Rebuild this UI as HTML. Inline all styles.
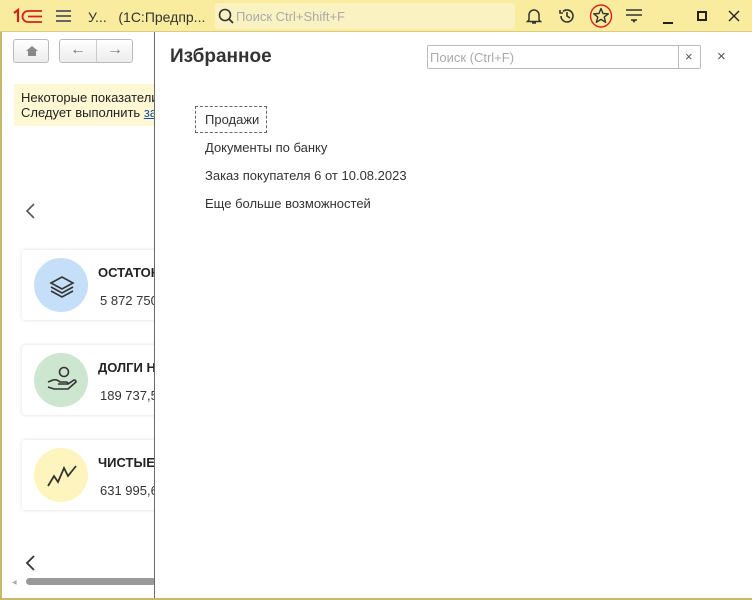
<!DOCTYPE html>
<html><head><meta charset="utf-8"><style>
*{margin:0;padding:0;box-sizing:border-box}
body{width:752px;height:600px;overflow:hidden;position:relative;background:#fff;font-family:"Liberation Sans",Arial,sans-serif;color:#333;font-size:13px}
.top{position:absolute;left:0;top:0;width:752px;height:32px;background:#f9ec9f;border-bottom:1px solid #d8cb83}
.lb{position:absolute;left:0;top:32px;width:2px;height:568px;background:#c8b86c}
.bb{position:absolute;left:0;top:598px;width:752px;height:2px;background:#c8b86c}
.btn{position:absolute;top:39px;height:24px;border:1px solid #bbb;border-radius:3px;background:linear-gradient(#fff,#ececec)}
.card{position:absolute;left:22px;width:140px;height:70px;background:#fff;box-shadow:0 0 4px rgba(0,0,0,.12);border-radius:3px}
.circ{position:absolute;left:12px;top:8px;width:54px;height:54px;border-radius:50%}
.ct{position:absolute;left:76px;top:15px;font-weight:bold;font-size:13px;color:#222}
.cv{position:absolute;left:78px;top:43px;font-size:13px;color:#333}
.panel{position:absolute;left:154px;top:32px;width:598px;height:566px;background:#fff;border-left:1.5px solid #6a6a6a}
.fav{position:absolute;left:50px;font-size:13px;color:#333}
</style></head><body>
<div class="top">
 <svg style="position:absolute;left:12px;top:8px" width="32" height="16" viewBox="0 0 32 16"><path d="M2 5 L6 2 V14" stroke="#d42020" stroke-width="2.2" fill="none"/><path d="M30 3 H16 A5.5 5.5 0 0 0 16 14 H30 M30 8.5 H16" stroke="#d42020" stroke-width="1.8" fill="none"/></svg>
 <div style="position:absolute;left:56px;top:10px;width:15px;height:2px;background:#666;box-shadow:0 5px 0 #666,0 10px 0 #666"></div>
 <div style="position:absolute;left:88px;top:9px;font-size:14px;color:#333">У...&nbsp;&nbsp; (1С:Предпр...</div>
 <div style="position:absolute;left:215px;top:3px;width:300px;height:26px;background:#fbf2c2;border-radius:3px"></div>
 <svg style="position:absolute;left:218px;top:8px" width="16" height="16"><circle cx="7" cy="7" r="5.5" stroke="#333" stroke-width="1.6" fill="none"/><path d="M11 11 L15 15" stroke="#333" stroke-width="1.8"/></svg>
 <div style="position:absolute;left:236px;top:9px;font-size:13px;color:#aaa">Поиск Ctrl+Shift+F</div>
 <svg style="position:absolute;left:525px;top:7px" width="18" height="18"><path d="M4 13 V8 A5 5 0 0 1 14 8 V13 L15.5 14.5 H2.5 Z M7 16 H11" stroke="#333" stroke-width="1.5" fill="none"/></svg>
 <svg style="position:absolute;left:558px;top:7px" width="18" height="18"><path d="M3 9 A6 6 0 1 0 5 4.5 M2 3 V6 H5 M9 5 V9 L12 11" stroke="#333" stroke-width="1.6" fill="none"/></svg>
 <svg style="position:absolute;left:588px;top:3px" width="26" height="26"><ellipse cx="13" cy="13" rx="10.5" ry="11" stroke="#e02020" stroke-width="1.4" fill="none"/><path d="M13 5.5 L15 10.5 L20.3 10.8 L16.2 14.1 L17.6 19.3 L13 16.4 L8.4 19.3 L9.8 14.1 L5.7 10.8 L11 10.5 Z" stroke="#333" stroke-width="1.4" fill="none" stroke-linejoin="round"/></svg>
 <svg style="position:absolute;left:625px;top:8px" width="18" height="16"><path d="M1 2 H17 M1 7 H17 M6 12 H12" stroke="#333" stroke-width="1.5"/><path d="M7 12 L9 15 L11 12Z" fill="#333"/></svg>
 <div style="position:absolute;left:663px;top:22px;width:10px;height:2px;background:#222"></div>
 <div style="position:absolute;left:697px;top:11px;width:10px;height:10px;border:2px solid #222"></div>
 <svg style="position:absolute;left:728px;top:10px" width="12" height="12"><path d="M1 1 L11 11 M11 1 L1 11" stroke="#222" stroke-width="1.4"/></svg>
</div>
<div class="lb"></div><div class="bb"></div>
<div class="btn" style="left:13px;width:36px"><svg style="position:absolute;left:11px;top:5px" width="14" height="12"><path d="M1 6 L7 1 L13 6 H11 V11 H3 V6Z" fill="#888"/></svg></div>
<div class="btn" style="left:59px;width:74px"><div style="position:absolute;left:36px;top:0;width:1px;height:22px;background:#ccc"></div><div style="position:absolute;left:10px;top:1px;font-size:16px;color:#777">&#8592;</div><div style="position:absolute;left:47px;top:1px;font-size:16px;color:#777">&#8594;</div></div>
<div style="position:absolute;left:14px;top:84px;width:145px;height:42px;background:#fdf7d3"></div>
<div style="position:absolute;left:21px;top:90px;font-size:13px;color:#222;line-height:15px;white-space:nowrap">Некоторые показатели<br>Следует выполнить <span style="color:#1a4fa0;text-decoration:underline">за</span></div>
<svg style="position:absolute;left:24px;top:203px" width="12" height="16"><path d="M10 1 L3 8 L10 15" stroke="#555" stroke-width="1.6" fill="none"/></svg>
<div class="card" style="top:250px"><div class="circ" style="background:#c4dff7"></div>
<svg style="position:absolute;left:26px;top:22px" width="28" height="28" viewBox="0 0 28 28" fill="none" stroke="#333" stroke-width="1.6"><path d="M3 11 L14 5 L25 11 L14 17Z M3 15 L14 21 L25 15 M3 19 L14 25 L25 19"/></svg>
<div class="ct">ОСТАТОК</div><div class="cv">5 872 750</div></div>
<div class="card" style="top:345px"><div class="circ" style="background:#cde6d0"></div>
<svg style="position:absolute;left:24px;top:20px" width="32" height="30" viewBox="0 0 32 30" fill="none" stroke="#333" stroke-width="1.6"><circle cx="18" cy="7" r="4.5"/><path d="M2 17 L7 15 Q11 14 14 17 H20 Q22 17 22 19 H12 M22 19 L28 15 Q30 15 30 17 L22 24 H8 L2 22"/></svg>
<div class="ct">ДОЛГИ Н</div><div class="cv">189 737,5</div></div>
<div class="card" style="top:440px"><div class="circ" style="background:#fdf5bd"></div>
<svg style="position:absolute;left:24px;top:22px" width="32" height="26" viewBox="0 0 32 26" fill="none" stroke="#333" stroke-width="1.8"><path d="M2 24 L8 14 L12 20 L18 6 L22 14 L30 4"/></svg>
<div class="ct">ЧИСТЫЕ</div><div class="cv">631 995,6</div></div>
<svg style="position:absolute;left:24px;top:555px" width="12" height="16"><path d="M10 1 L3 8 L10 15" stroke="#333" stroke-width="1.8" fill="none"/></svg>
<div style="position:absolute;left:12px;top:579px;font-size:6px;color:#aaa">&#9664;</div>
<div style="position:absolute;left:26px;top:578px;width:130px;height:7px;border-radius:4px;background:#999"></div>
<div class="panel">
 <div style="position:absolute;left:15px;top:14px;font-size:19px;font-weight:bold;color:#333">Избранное</div>
 <div style="position:absolute;left:272px;top:13px;width:274px;height:24px;border:1px solid #bbb;border-radius:2px">
  <div style="position:absolute;left:2px;top:4px;font-size:13px;color:#aaa">Поиск (Ctrl+F)</div>
  <div style="position:absolute;left:250px;top:0;width:1px;height:22px;background:#bbb"></div>
  <div style="position:absolute;left:257px;top:3px;font-size:13px;color:#555">×</div>
 </div>
 <div style="position:absolute;left:562px;top:16px;font-size:15px;color:#555">×</div>
 <div style="position:absolute;left:40px;top:74px;width:72px;height:27px;border:1px dashed #666"></div>
 <div class="fav" style="top:80px">Продажи</div>
 <div class="fav" style="top:108px">Документы по банку</div>
 <div class="fav" style="top:136px">Заказ покупателя 6 от 10.08.2023</div>
 <div class="fav" style="top:164px">Еще больше возможностей</div>
</div>
</body></html>
